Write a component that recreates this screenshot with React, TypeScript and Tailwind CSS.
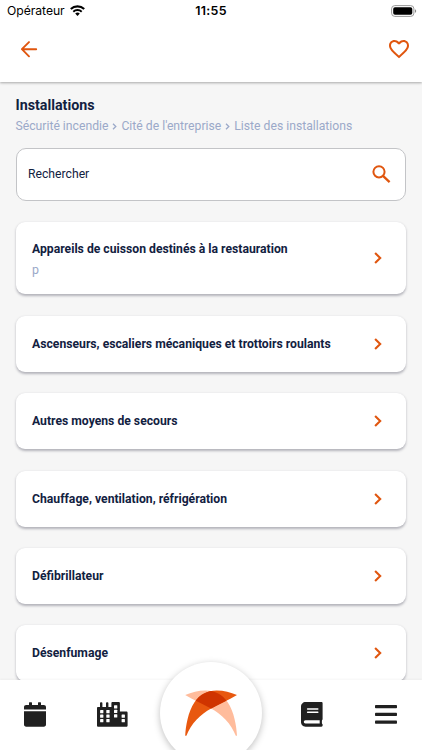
import { MdFavoriteBorder } from "react-icons/md";

interface Installation {
  name: string;
  detail?: string;
}

const INSTALLATIONS: Installation[] = [
  { name: "Appareils de cuisson destinés à la restauration", detail: "p" },
  { name: "Ascenseurs, escaliers mécaniques et trottoirs roulants" },
  { name: "Autres moyens de secours" },
  { name: "Chauffage, ventilation, réfrigération" },
  { name: "Défibrillateur" },
  { name: "Désenfumage" },
];

const BREADCRUMB = ["Sécurité incendie", "Cité de l'entreprise", "Liste des installations"];

function StatusBar() {
  return (
    <div className="grid h-[22px] grid-cols-3 items-center font-['Inter',sans-serif] text-black">
      <div className="flex items-center gap-[5px] pl-[7px] text-[12.2px]">
        <span className="w-[58px] tracking-[-0.05px]">Opérateur</span>
        <svg className="h-[11px] w-[15px]" viewBox="0 0 15 11" fill="none" stroke="currentColor">
          <path d="M.8 4.1a9.6 9.6 0 0 1 13.4 0" strokeWidth="2.1" />
          <path d="M3.3 6.7a6 6 0 0 1 8.4 0" strokeWidth="1.9" />
          <path d="M7.5 11 5.2 8.6a3.4 3.4 0 0 1 4.6 0z" fill="currentColor" stroke="none" />
        </svg>
      </div>
      <span className="text-center text-[12.4px] font-semibold tracking-[0.3px]">11:55</span>
      <div className="flex justify-end pr-[5px]">
        <svg className="h-3 w-[26px]" viewBox="0 0 26 12">
          <rect x=".6" y=".6" width="22.3" height="10.8" rx="3.2" fill="none" stroke="#999" />
          <rect x="2.2" y="2.2" width="19.1" height="7.6" rx="1.8" />
          <path d="M24 4.2c1.6.5 1.6 3.1 0 3.6z" fill="#888" />
        </svg>
      </div>
    </div>
  );
}

function Header() {
  return (
    <header className="relative z-10 h-[82px] shrink-0 bg-white shadow-[0_0.5px_2.5px_rgba(0,0,0,0.32)]">
      <StatusBar />
      <div className="flex h-[54px] items-center justify-between pl-5 pr-[11px] text-[#e0560f]">
        <button aria-label="Retour">
          <svg
            className="h-[18px] w-[18px]"
            viewBox="0 0 18 18"
            fill="none"
            stroke="currentColor"
            strokeWidth="1.9"
            strokeLinecap="round"
            strokeLinejoin="round"
          >
            <path d="M16.2 9.2H2M9 2.1 1.9 9.2 9 16.3" />
          </svg>
        </button>
        <button aria-label="Favori">
          <MdFavoriteBorder className="h-6 w-6" />
        </button>
      </div>
    </header>
  );
}

function Breadcrumb() {
  return (
    <p className="-ml-[0.5px] flex h-4 items-center whitespace-nowrap text-[12.2px] text-[#9ba9c9]">
      {BREADCRUMB.map((item, i) => (
        <span key={item} className="flex items-center">
          {i > 0 && (
            <svg className="mx-1 h-[7px] w-[5px]" viewBox="0 0 5 7" fill="none" stroke="currentColor">
              <path d="M1 .8 3.8 3.5 1 6.2" strokeWidth="1.3" />
            </svg>
          )}
          {item}
        </span>
      ))}
    </p>
  );
}

function SearchIcon() {
  return (
    <svg
      className="mb-[2px] h-[18px] w-[19px] text-[#e0560f]"
      viewBox="0 0 19 18"
      fill="none"
      stroke="currentColor"
    >
      <circle cx="7" cy="6.8" r="5.6" strokeWidth="2" />
      <path d="m11 10.8 6.6 6.3" strokeWidth="2.3" />
    </svg>
  );
}

function InstallationCard({ name, detail }: Installation) {
  return (
    <button
      className={
        "flex w-full shrink-0 items-center justify-between rounded-[9px] bg-white pl-4 pr-[24px] text-left shadow-[0_1.5px_2.5px_rgba(25,25,50,0.3)] " +
        (detail ? "h-[72px]" : "h-[56px]")
      }
    >
      <span className={"flex flex-col whitespace-nowrap " + (detail ? "pt-[3px]" : "")}>
        <span className="text-[12.2px] font-bold leading-5">{name}</span>
        {detail && <span className="pt-px text-[12.4px] leading-5 text-[#9ba9c9]">{detail}</span>}
      </span>
      <svg className="h-[12px] w-[8px] text-[#e0560f]" viewBox="0 0 8 12" fill="none" stroke="currentColor">
        <path d="M1.1 1 6.2 6 1.1 11" strokeWidth="2.1" />
      </svg>
    </button>
  );
}

function CalendarIcon() {
  return (
    <svg className="h-[25px] w-[22px]" viewBox="0 0 22 25" fill="currentColor">
      <path d="M0 7.6V5.2C0 3.9.9 3 2.2 3H5V.8c0-.4.2-.6.6-.6h1.8c.4 0 .6.2.6.6V3h6V.8c0-.4.2-.6.6-.6h1.8c.4 0 .6.2.6.6V3h2.800C21.100 3 22 3.900 22 5.200v2.400zM0 9.200h22v13.400c0 1.300-.9 2.200-2.200 2.200H2.200C.9 24.800 0 23.900 0 22.600z" />
    </svg>
  );
}

function CityIcon() {
  const windows = [
    [3.1, 8], [3.1, 12.5], [3.1, 17],
    [9.3, 8], [9.3, 12.5], [9.3, 17],
    [17, 3.3], [17, 7.8], [17, 12.3],
    [24.6, 12.5], [24.6, 17],
  ];
  return (
    <svg className="h-[25px] w-[31px]" viewBox="0 0 31 25">
      <path
        fill="currentColor"
        d="M0 6c0-.7.4-1.1 1.100-1.100H3V.8c0-.9 2.400-.9 2.400 0v4.100H9V.8c0-.9 2.400-.9 2.400 0v4.100h3V1.300c0-.8.4-1.200 1.200-1.200h6.100c.8 0 1.200.4 1.200 1.200v8.200h6.300c.9 0 1.400.5 1.400 1.400v12.500c0 .9-.5 1.400-1.400 1.400H1.400c-.9 0-1.400-.5-1.400-1.400z"
      />
      {windows.map(([x, y]) => (
        <rect key={x + "-" + y} x={x} y={y} width="3.3" height="3.2" rx=".5" fill="#fff" />
      ))}
    </svg>
  );
}

function BookIcon() {
  return (
    <svg className="h-[25px] w-[22px]" viewBox="0 0 22 25">
      <path
        fill="currentColor"
        d="M4.6.1h15.800c.8 0 1.200.4 1.200 1.200v15.800c0 .5-.2.9-.6 1.100-.2 1-.2 2.500 0 3.500.4.2.6.5.6.9v1c0 .7-.4 1.200-1.200 1.200H4.600C2 24.800 0 22.700 0 20.100V4.800C0 2.200 2 .1 4.600.1z"
      />
      <path d="M4.5 18.3h14.200v3.200H4.500c-2.200 0-2.200-3.200 0-3.200z" fill="#fff" />
      <path d="M6.6 7.100h10.200M6.600 10.200h10.200" stroke="#fff" strokeWidth="1.5" strokeLinecap="round" />
    </svg>
  );
}

function MenuIcon() {
  return (
    <svg className="h-[25px] w-[22px]" viewBox="0 0 22 25" fill="currentColor">
      <rect y="3" width="22" height="3.3" rx=".8" />
      <rect y="10.7" width="22" height="3.3" rx=".8" />
      <rect y="18.4" width="22" height="3.3" rx=".8" />
    </svg>
  );
}

function Logo() {
  const left =
    "M.2 45.8C.6 37 3 21.500 9.500 12.300 15 4.500 22 .6 31.600.6c7.400 0 14 2 20.400 4.400C43 10.200 34.500 14.200 26.200 18.400 15.500 24 6 33.500 1.400 45.800z";
  const right =
    "M52 45.800C51.600 37 49.200 21.500 42.700 12.300 37.200 4.500 30.200.6 20.600.6 13.200.6 6.600 2.600.2 5 9.200 10.200 17.700 14.200 26 18.400 36.700 24 46.200 33.500 50.800 45.800z";
  return (
    <svg className="h-[47px] w-[52.5px]" viewBox="0 0 52.5 47">
      <clipPath id="logo-left">
        <path d={left} />
      </clipPath>
      <path d={right} fill="#ffbc9c" />
      <path d={left} fill="#e8580f" />
      <path d={right} fill="#cf3400" clipPath="url(#logo-left)" />
    </svg>
  );
}

function TabBar() {
  return (
    <nav className="relative z-10 flex h-[70px] shrink-0 items-center bg-white pb-[2px] text-[#202020] shadow-[0_-1px_2px_rgba(0,0,0,0.04)]">
      <button className="flex w-[70px] justify-center" aria-label="Calendrier">
        <CalendarIcon />
      </button>
      <button className="ml-px flex w-[84px] justify-center" aria-label="Bâtiments">
        <CityIcon />
      </button>
      {/* the round button rises over the list */}
      <button
        className="absolute left-[160px] top-[-18px] flex h-[102px] w-[102px] items-center justify-center rounded-full bg-white shadow-[0_2px_7px_rgba(0,0,0,0.25)]"
        aria-label="Accueil"
      >
        <Logo />
      </button>
      <button className="ml-[120px] flex w-[76px] justify-center" aria-label="Documents">
        <BookIcon />
      </button>
      <button className="flex w-[73px] justify-center" aria-label="Menu">
        <MenuIcon />
      </button>
    </nav>
  );
}

export default function App() {
  return (
    <div className="flex h-[750px] w-[422px] flex-col overflow-hidden bg-[#f6f6f6] font-['Roboto',sans-serif] text-[#12213f]">
      <Header />
      <main className="flex min-h-0 flex-1 flex-col overflow-hidden px-4 pt-[13px]">
        <h1 className="-ml-[0.5px] text-[14.25px] font-bold leading-5">Installations</h1>
        <div className="mt-[3px]">
          <Breadcrumb />
        </div>
        <label className="-ml-[0.5px] mt-[14px] flex h-[53px] shrink-0 items-center justify-between rounded-[10px] border border-[#c3c4c7] bg-white pl-[11.5px] pr-[14px]">
          <span className="text-[12.2px]">Rechercher</span>
          <SearchIcon />
        </label>
        <div className="mt-[21.4px] flex flex-col gap-[21.4px]">
          {INSTALLATIONS.map((item) => (
            <InstallationCard key={item.name} {...item} />
          ))}
        </div>
      </main>
      <TabBar />
    </div>
  );
}
